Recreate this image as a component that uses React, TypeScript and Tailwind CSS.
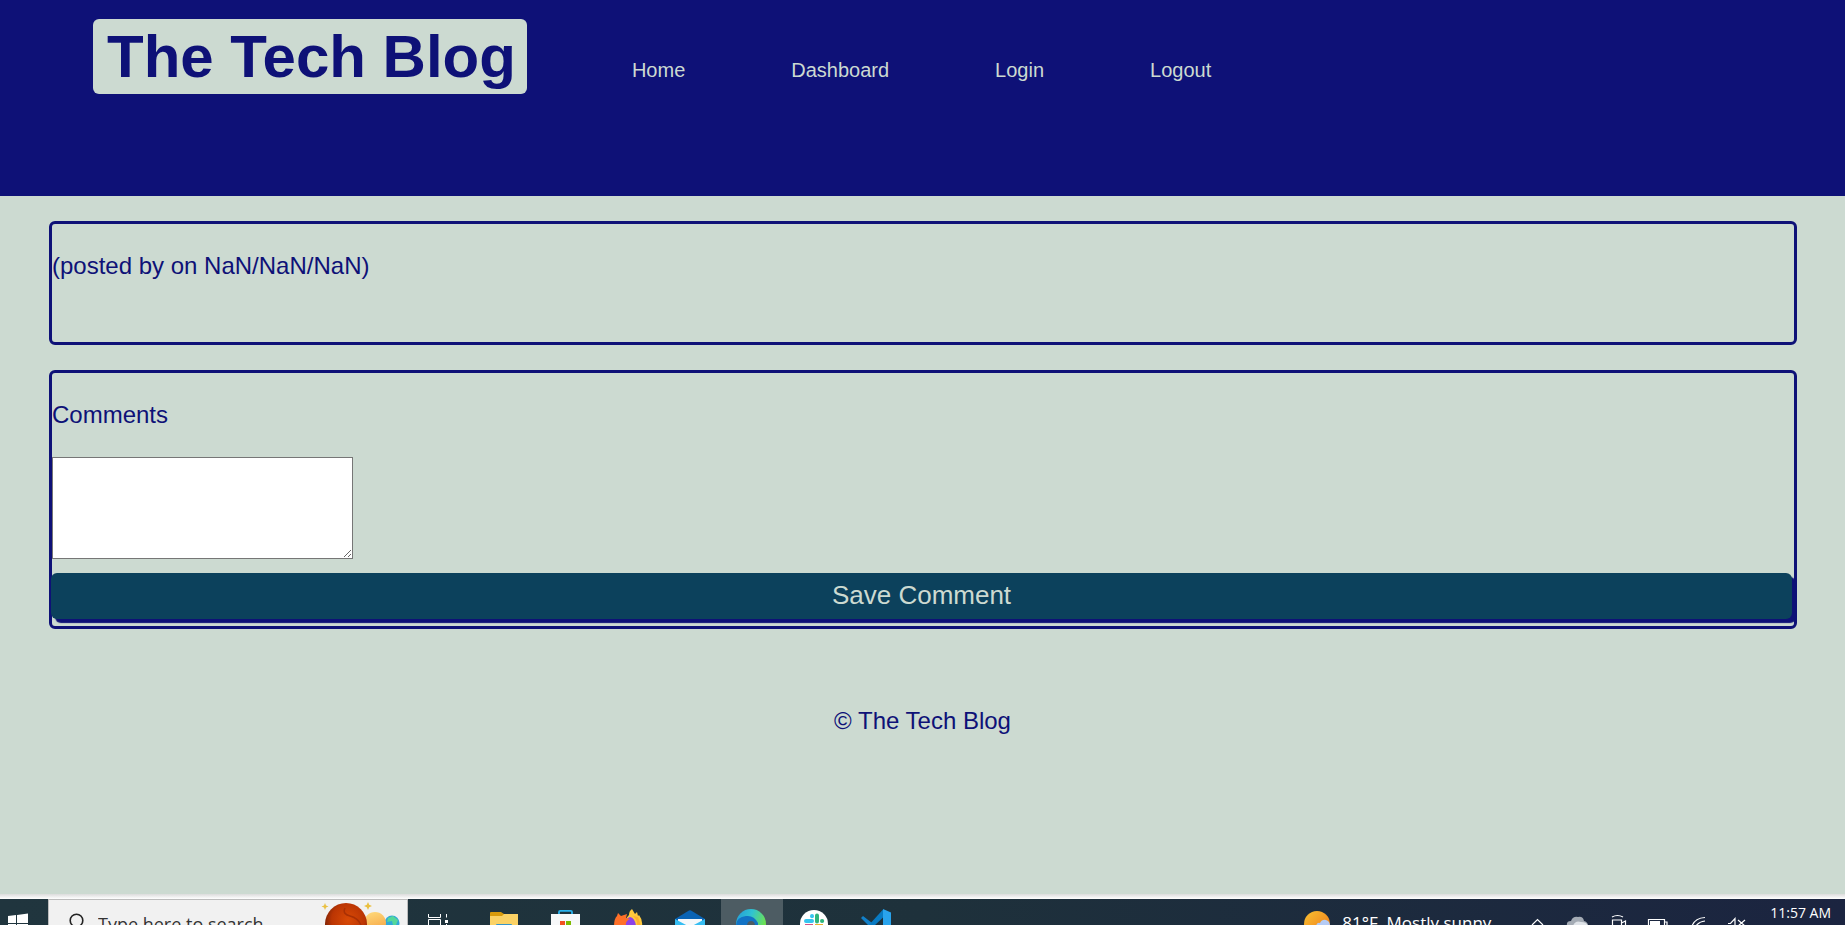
import React from "react";

const navLinks = ["Home", "Dashboard", "Login", "Logout"];

function StartIcon() {
  return (
    <svg className="h-[26px] w-12 shrink-0" viewBox="0 0 48 26" fill="#fff" aria-hidden="true">
      <path d="M8 17l8-1v8H8zM17 15.9l11-1.400V24H17zM8 25h8v3H8zM17 25h11v3H17z" />
    </svg>
  );
}

function SearchIcon() {
  return (
    <svg className="h-[25px] w-[49px] shrink-0" viewBox="0 0 49 25" fill="none" stroke="#222" strokeWidth="1.6" aria-hidden="true">
      <circle cx="27.500" cy="20.500" r="6.300" />
      <path d="M23 25l-4 4" />
    </svg>
  );
}

function PlanetsArt() {
  return (
    <svg className="h-[25px] w-[89px] shrink-0" viewBox="0 0 89 25" aria-hidden="true">
      <defs>
        <radialGradient id="mars" cx="0.55" cy="0.4" r="0.6">
          <stop offset="0" stopColor="#d94a06" />
          <stop offset="0.65" stopColor="#bb3503" />
          <stop offset="1" stopColor="#742006" />
        </radialGradient>
        <linearGradient id="venus" x1="0" y1="0" x2="0.3" y2="1">
          <stop offset="0" stopColor="#ffdc7d" />
          <stop offset="1" stopColor="#f6a545" />
        </linearGradient>
      </defs>
      <circle cx="74" cy="23" r="7.500" fill="#31a8d8" />
      <path d="M70 18l5-2 5 4-2 5h-3l-1-4-5 1z" fill="#54d79a" />
      <circle cx="57" cy="23" r="11" fill="url(#venus)" />
      <circle cx="28" cy="24" r="21" fill="url(#mars)" />
      <path d="M27 8q-3 6 5 8t11 9" fill="none" stroke="#a93004" strokeWidth="1.500" />
      <path d="M7 3l1 2.500 2.500 1-2.500 1L7 10 6 7.500 3.500 6.500 6 5.500zM50 2l1.200 2.800L54 6l-2.800 1.200L50 10l-1.200-2.800L46 6l2.800-1.200z" fill="#eac040" />
    </svg>
  );
}

function AppSvg({ children }: { children: React.ReactNode }) {
  return (
    <svg className="h-[26px] w-[62px]" viewBox="0 0 62 26" aria-hidden="true">
      {children}
    </svg>
  );
}

const apps = [
  {
    name: "Task View",
    art: (
      <g fill="none" stroke="#fff">
        <path d="M17.500 15v3.500h12V15M17.500 27v-6.500h12V27M35.500 15v3.500M35.500 25v2" />
        <path d="M34 21h3v3h-3z" fill="#fff" stroke="none" />
      </g>
    ),
  },
  {
    name: "File Explorer",
    art: (
      <>
        <path d="M17 14q0-1 1-1h10l3 2v4H17z" fill="#d99b0b" />
        <path d="M17 17h12l2-2h14v12H17z" fill="#fbd265" />
        <path d="M23 27v-1q0-1 1-1h14q1 0 1 1v1z" fill="#3795c9" />
      </>
    ),
  },
  {
    name: "Microsoft Store",
    art: (
      <>
        <path d="M24 16v-3q0-1.200 1.200-1.200h10.600q1.200 0 1.200 1.200v3" fill="none" stroke="#29b2ed" strokeWidth="1.800" />
        <path d="M16 15h29v12H16z" fill="#f7f8f9" />
        <path d="M25 22h5v5h-5z" fill="#f25022" />
        <path d="M31 22h5v5h-5z" fill="#7fba00" />
      </>
    ),
  },
  {
    name: "Firefox",
    art: (
      <>
        <path d="M27 27q0-6 5-11 0-4 3-6l3 5 2-2 1 4 1-1q4 5 3 11z" fill="#ffc93c" />
        <path d="M28 27q-1-7 5-9 5 1 6 9z" fill="#8c42e8" />
        <path d="M17 27q0-7 3-10l1-3 3 3 6-2-1 4 4 1q-5 2-4 7z" fill="#ff7028" />
        <path d="M40 27q1-6-4-10l5 1 3 9z" fill="#ffb02d" />
      </>
    ),
  },
  {
    name: "Mail",
    art: (
      <>
        <path d="M16 20l14-8.500q1-.6 2 0L46 20v7H16z" fill="#0963b4" />
        <path d="M19 20h24v7H19z" fill="#f6f8fa" />
        <path d="M16 20l13 7H16zM46 20l-13 7h13z" fill="#35bdf2" />
      </>
    ),
  },
  {
    name: "Microsoft Edge",
    art: (
      <>
        <defs>
          <linearGradient id="edge" x1="0" y1="0" x2="1" y2="0.4">
            <stop offset="0" stopColor="#2399d9" />
            <stop offset="0.5" stopColor="#30c3d2" />
            <stop offset="1" stopColor="#6ee24f" />
          </linearGradient>
        </defs>
        <circle cx="30" cy="25" r="15" fill="url(#edge)" />
        <path d="M15 27q0-9 10-10 8-1 12 7v3z" fill="#1273c5" />
        <path d="M26 27q0-5 4-5t4 5z" fill="#4d5c63" />
      </>
    ),
  },
  {
    name: "Slack",
    art: (
      <>
        <circle cx="31" cy="25" r="14" fill="#fff" />
        <g fill="none" strokeWidth="4" strokeLinecap="round">
          <path d="M23 22h6M29 17v.2" stroke="#36c5f0" />
          <path d="M34 16.500v6M39 22h.2" stroke="#2eb67d" />
        </g>
        <path d="M22 25h8v2h-8z" fill="#d05587" />
        <path d="M32 25h8v2h-8z" fill="#ecb22e" />
      </>
    ),
  },
  {
    name: "Visual Studio Code",
    art: (
      <>
        <path d="M16 19l2-2 13 10h-7z" fill="#1180c9" />
        <path d="M23 27l15-16.500v8L29 27z" fill="#087ac2" />
        <path d="M38 10l8 3.500V27h-8z" fill="#29a3ec" />
      </>
    ),
  },
];

function SystemTray() {
  return (
    <svg className="h-[26px] w-[240px] shrink-0" viewBox="0 0 240 26" fill="none" stroke="#fff" strokeWidth="1.200" aria-hidden="true">
      <path d="M2 26l5.500-5.500L13 26" />
      <g stroke="none">
        <path d="M37 27q-1-5 4-5 2-5 7-4 5-1 6 4 4 1 4 5z" fill="#a4abb4" />
        <path d="M43 27q2-6 8-4 6 0 7 4z" fill="#dfe3e8" />
      </g>
      <path d="M82 18q5.500-3 11 0M82.500 27v-6h9v6M91.500 24l4-2v5" />
      <path d="M118.500 27v-6.500h16V27M135 23h2v4" />
      <path d="M120 22h10v5h-10z" fill="#fff" stroke="none" />
      <path d="M162 27q3-8 13-8.500M166 27q3-4.500 9-5" />
      <path d="M198 24.500h2.500l4.500-5V27M208 21l7 6M215 21l-7 6" />
    </svg>
  );
}

function Taskbar() {
  return (
    <footer className="flex h-[26px] shrink-0 items-start overflow-hidden bg-linear-to-r from-[#20353e] via-[#1e313b] to-[#1b2440] font-['Open_Sans','Noto_Sans',sans-serif] text-white">
      <button type="button" aria-label="Start" className="w-12 shrink-0">
        <StartIcon />
      </button>
      <label className="flex h-10 w-[360px] shrink-0 border border-[#bcbcbc] bg-[#f1f1f1]">
        <SearchIcon />
        <input
          type="text"
          aria-label="Search"
          placeholder="Type here to search"
          className="mt-[10px] h-7 min-w-0 flex-1 bg-transparent text-[18px] leading-7 text-[#333] outline-none placeholder:text-[#333]"
        />
        <PlanetsArt />
      </label>
      <div className="flex pl-[3px]">
        {apps.map((app) => (
          <button
            key={app.name}
            type="button"
            aria-label={app.name}
            className={app.name === "Microsoft Edge" ? "bg-[#4d5c63]" : ""}
          >
            <AppSvg>{app.art}</AppSvg>
          </button>
        ))}
      </div>
      <div className="ml-auto flex items-start pr-[14px]">
        <svg className="h-[26px] w-[38px] shrink-0" viewBox="0 0 38 26" aria-hidden="true">
          <defs>
            <linearGradient id="sun" x1="0" y1="0" x2="1" y2="1">
              <stop offset="0" stopColor="#f9c132" />
              <stop offset="1" stopColor="#ee7416" />
            </linearGradient>
          </defs>
          <circle cx="13" cy="25" r="13" fill="url(#sun)" />
          <path d="M12 27q1-4 4-3 2-4 6-3 4 1 4 6z" fill="#b4cbf5" />
        </svg>
        <span className="mt-[10px] w-[188px] text-[17px] leading-7 whitespace-nowrap">81°F&nbsp; Mostly sunny</span>
        <SystemTray />
        <time className="mt-1 text-sm leading-5 whitespace-nowrap">11:57 AM</time>
      </div>
    </footer>
  );
}

export default function App() {
  return (
    <div className="flex min-h-screen flex-col bg-[#ccdad1] font-['Liberation_Sans',Arial,sans-serif] text-2xl text-[#0e1177]">
      <header className="flex items-start bg-[#0e1177] px-[93px] pt-[19px] pb-[102px]">
        <h1 className="rounded-md bg-[#ccdad1] pr-[11px] pl-[14px] text-[60px] leading-[75px] font-bold whitespace-nowrap">
          The Tech Blog
        </h1>
        <nav className="mt-[39px] ml-[105px] flex gap-[106px] text-xl leading-6 text-[#ccdad1]">
          {navLinks.map((label) => (
            <a key={label} href="#">
              {label}
            </a>
          ))}
        </nav>
      </header>

      <main className="mx-12 mt-[25px] flex flex-col gap-[25px] pl-px">
        <section className="rounded-md border-[3px] border-[#0e1177] pt-7 pb-[62px]">
          <p className="leading-7">(posted by on NaN/NaN/NaN)</p>
        </section>

        <section className="rounded-md border-[3px] border-[#0e1177] pt-7 pb-[7px]">
          <label htmlFor="comment" className="block leading-7">
            Comments
          </label>
          <textarea
            id="comment"
            className="mt-7 block h-[102px] w-[301px] border border-[#767676] bg-white p-0.5 text-base"
          />
          <button
            type="button"
            className="mt-[14px] -ml-px block w-[calc(100%-1px)] rounded-md bg-[#0c415c] pb-0.5 text-[26px] leading-[44px] text-[#ccdad1] shadow-[4px_4px_1px_#0e1177]"
          >
            Save Comment
          </button>
        </section>
      </main>

      <p className="mt-[78px] text-center leading-7">© The Tech Blog</p>

      <div className="mt-auto h-[5px] shrink-0 bg-linear-to-b from-[#dcdcdc] to-white" />
      <Taskbar />
    </div>
  );
}
